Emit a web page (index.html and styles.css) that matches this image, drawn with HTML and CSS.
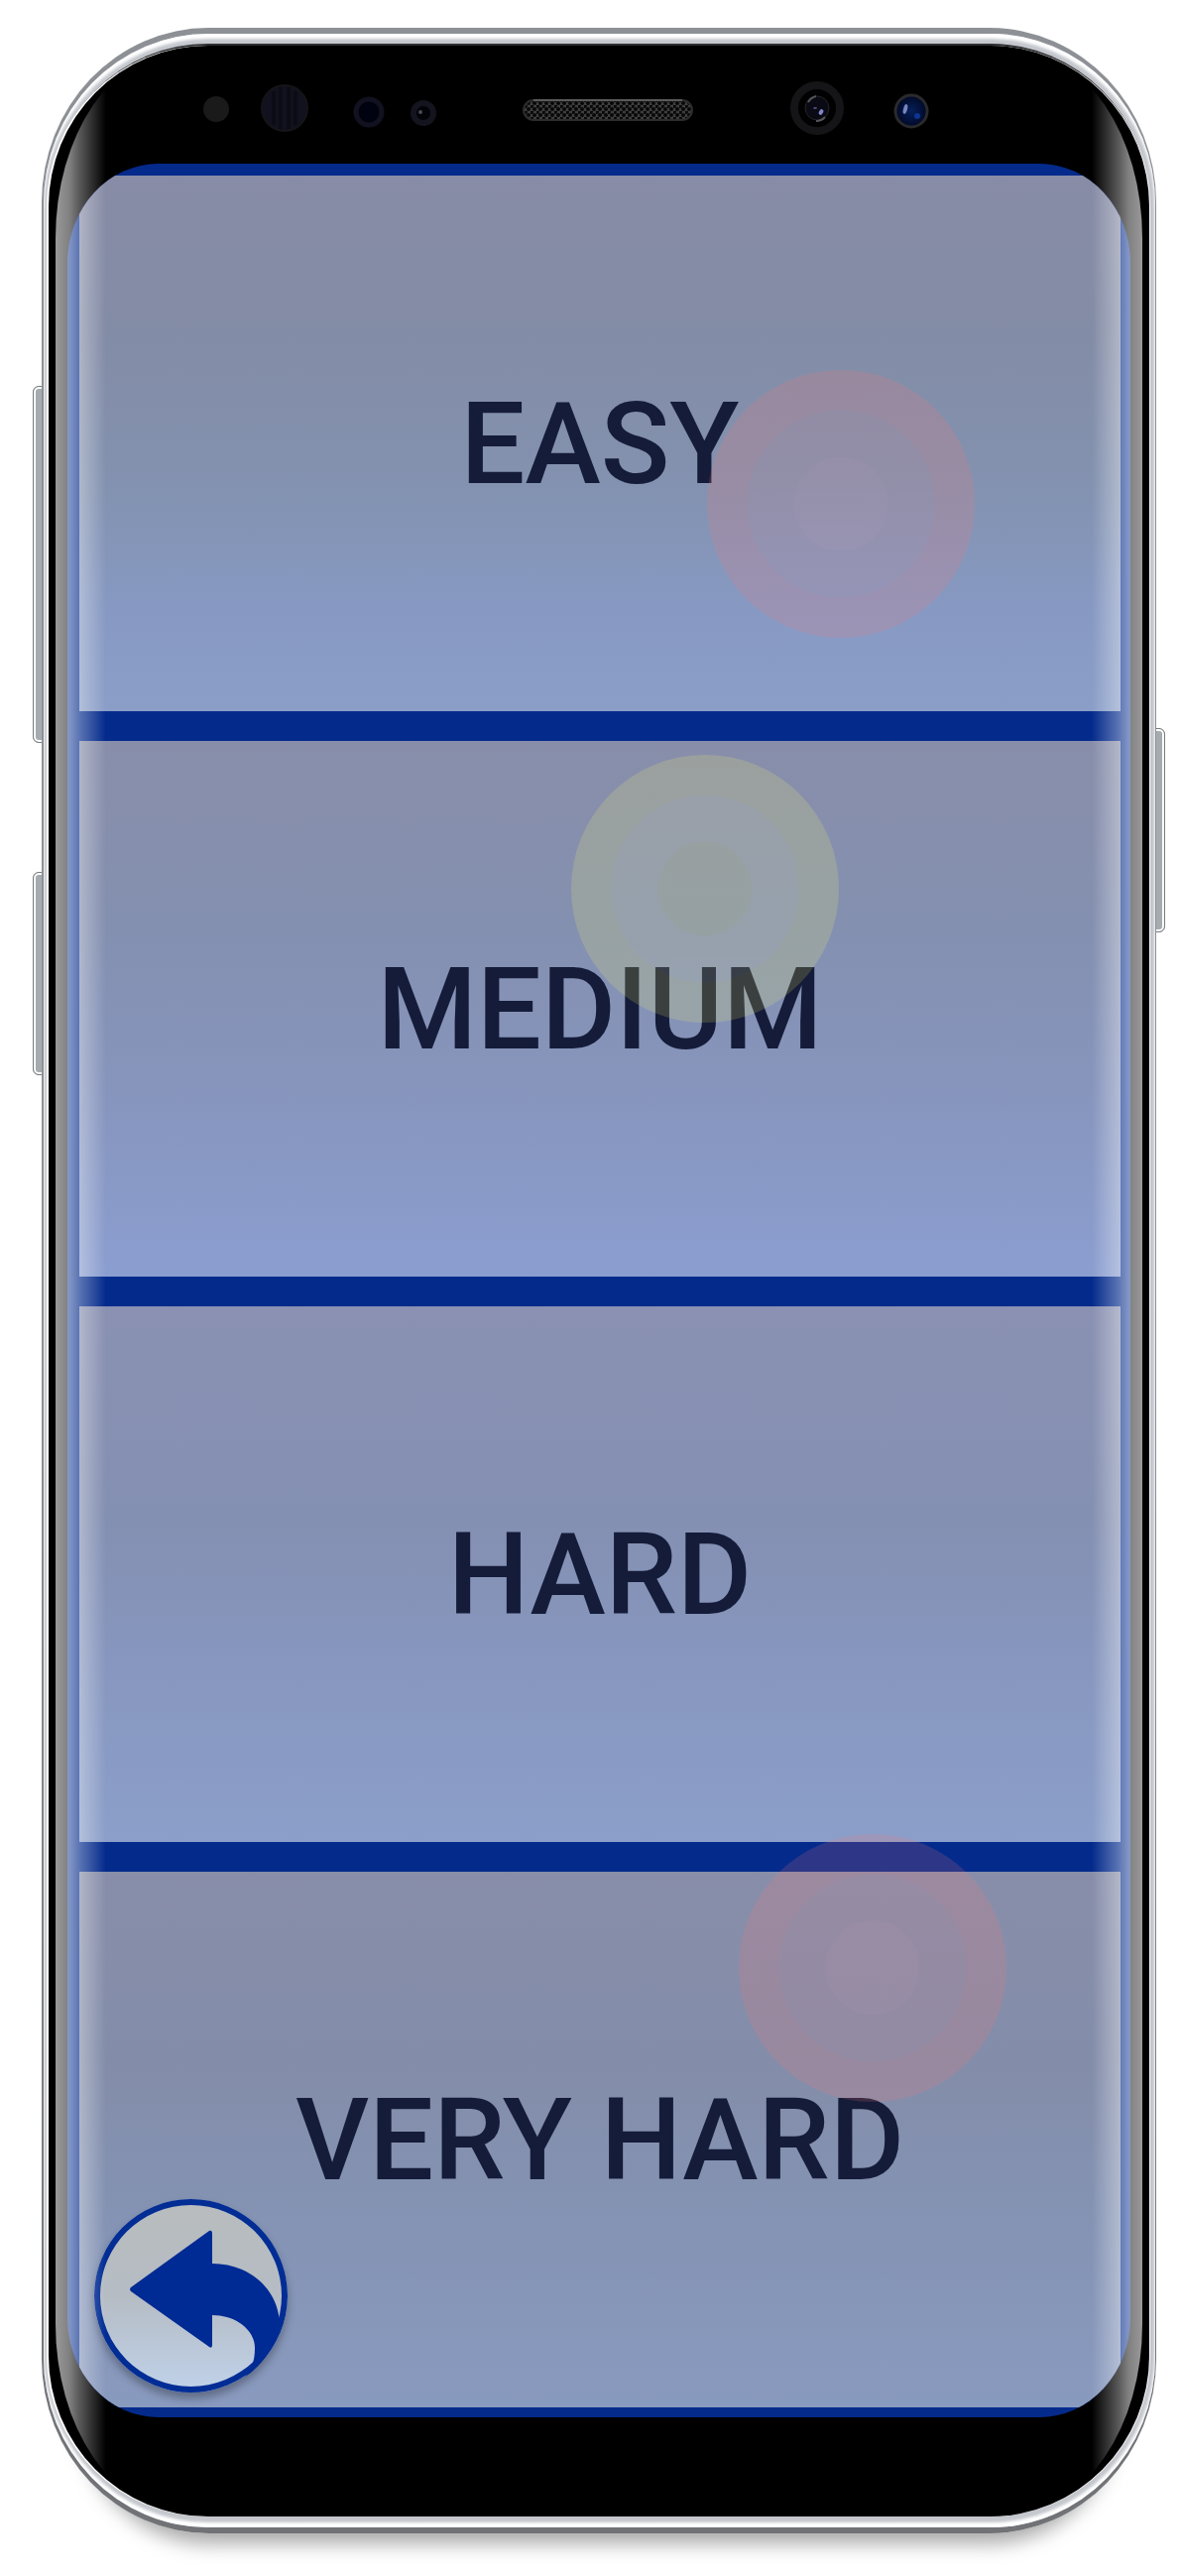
FILE: index.html
```html
<!DOCTYPE html>
<html lang="en">
<head>
<meta charset="utf-8">
<meta name="viewport" content="width=device-width, initial-scale=1">
<title>Select difficulty</title>
<link rel="stylesheet" href="styles.css">
</head>
<body>
<main class="phone">
  <span class="side-key side-key-volume"></span>
  <span class="side-key side-key-assistant"></span>
  <span class="side-key side-key-power"></span>
  <div class="shell">
    <div class="rim">
      <div class="bezel">
        <svg class="sensors" viewBox="0 0 1110 119" aria-hidden="true">
          <defs>
            <pattern id="mesh" width="6" height="6" patternUnits="userSpaceOnUse">
              <rect width="6" height="6" fill="#3d3d3d"/>
              <circle cx="1" cy="1" r="2" fill="#080808"/>
              <circle cx="4" cy="4" r="2" fill="#080808"/>
            </pattern>
            <radialGradient id="lens"><stop offset="0" stop-color="#04205a"/><stop offset="1" stop-color="#020824"/></radialGradient>
          </defs>
          <circle cx="169" cy="64" r="13" fill="#1a1a1b"/>
          <circle cx="238" cy="63" r="23" fill="#11111f" stroke="#151517" stroke-width="2"/>
          <path d="M227 46v34M234 42v42M242 42v42M249 46v34" stroke="#0b0b12" stroke-width="3"/>
          <circle cx="323" cy="67" r="13" fill="#01020f" stroke="#11111f" stroke-width="5"/>
          <circle cx="378" cy="68" r="10" fill="#020208" stroke="#14141f" stroke-width="6"/>
          <circle cx="375" cy="67" r="2" fill="#4a4a5c"/>
          <rect x="479" y="55" width="170" height="20" rx="10" fill="url(#mesh)" stroke="#2c2c2c" stroke-width="2"/>
          <path d="M489 55h150" stroke="#5a5a5a" stroke-width="2"/>
          <circle cx="775" cy="63" r="23" fill="#010101" stroke="#151517" stroke-width="8"/>
          <circle cx="775" cy="63" r="12" fill="#0a0a14" stroke="#242428" stroke-width="1"/>
          <path d="M766 57a12 12 0 0 1 8-6M783 72a12 12 0 0 1-9 4" stroke="#55555c" stroke-width="2" fill="none"/>
          <ellipse cx="779" cy="67" rx="2" ry="3" fill="#7f86c8" transform="rotate(30 779 67)"/>
          <ellipse cx="773" cy="63" rx="2" ry="1" fill="#4a4f86"/>
          <circle cx="870" cy="66" r="16" fill="url(#lens)" stroke="#2a2a2c" stroke-width="3"/>
          <ellipse cx="864" cy="64" rx="2" ry="5" fill="#7585bd" transform="rotate(15 864 64)"/>
          <circle cx="876" cy="71" r="3" fill="#0a3590"/>
        </svg>
        <div class="screen">
          <nav class="levels" aria-label="Difficulty">
            <button class="level level-easy" type="button">EASY</button>
            <button class="level level-medium" type="button">MEDIUM</button>
            <button class="level level-hard" type="button">HARD</button>
            <button class="level level-very-hard" type="button">VERY HARD</button>
          </nav>
          <span class="bubble bubble-red bubble-first"></span>
          <span class="bubble bubble-yellow bubble-second"></span>
          <span class="bubble bubble-red bubble-third"></span>
          <button class="back" type="button" aria-label="Back">
            <svg viewBox="0 0 195 195" aria-hidden="true">
              <path d="M37 89 116 32Q119 31 119 35V65C156 65 185 90 187 124C184 147 170 168 152 179C158 172 162 165 162 150C162 132 143 117 119 117V147Q119 151 116 149L37 93Q35 91 37 89Z" fill="#002a94"/>
            </svg>
          </button>
        </div>
        <div class="glare"></div>
      </div>
    </div>
  </div>
</main>
</body>
</html>
```
FILE: styles.css
```css
* {
  box-sizing: border-box;
}

body {
  margin: 0;
  background: #fff;
  font-family: Roboto, "Liberation Sans", sans-serif;
}

.phone {
  position: relative;
  padding: 28px 26px 43px 42px;
  overflow: hidden;
}

.shell {
  position: relative;
  padding: 6px 1px 6px 2px;
  border-radius: 168px / 176px;
  background: linear-gradient(#8d9095, #8d9298 50%, #707276);
  box-shadow: 0 46px 20px -36px rgba(0, 0, 0, 0.35);
}

.rim {
  padding: 12px 6px 11px 5px;
  border-radius: 166px / 171px;
  background: #c4c7cd;
  box-shadow: inset 0 5px 3px #fff, inset 0 -5px 3px #fff;
}

.bezel {
  position: relative;
  padding-bottom: 100px;
  border-radius: 161px / 162px;
  background: #000;
  box-shadow: 1px 0 0 #fff, -2px 0 0 #fff, 0 -2px 0 #2c2d2f;
}

.sensors {
  display: block;
  width: 100%;
  height: 119px;
}

.screen {
  position: relative;
  margin: 0 19px;
  padding: 12px 10px 10px 12px;
  overflow: hidden;
  border-radius: 92px / 100px;
  background: #042b8c;
}

.levels {
  display: grid;
  gap: 30px;
}

.level {
  min-height: 540px;
  padding: 0;
  border: 0;
  color: #151c39;
  font: 500 115px/1 Roboto, "Liberation Sans", sans-serif;
}

.level-easy {
  background: linear-gradient(#888ca6, #838ca6 30%, #8392b0 58%, #8799c2 80%, #8a9ec8);
}

.level-medium {
  background: linear-gradient(#888eaa, #8490b0 35%, #8795bd 65%, #8b9ed0);
}

.level-hard {
  background: linear-gradient(#8a91b2, #8490b2 40%, #8796be 65%, #8b9fca);
}

.level-very-hard {
  background: linear-gradient(#888eaa, #838da9 35%, #8492b2 60%, #899abf);
}

.bubble {
  position: absolute;
  width: 270px;
  height: 270px;
  border-radius: 50%;
  pointer-events: none;
}

.bubble-red {
  background: radial-gradient(circle, rgba(245, 135, 140, 0.16) 47px, rgba(235, 125, 125, 0.14) 48px 94px, rgba(255, 115, 110, 0.17) 95px);
}

.bubble-yellow {
  background: radial-gradient(circle, rgba(255, 255, 90, 0.15) 47px, rgba(255, 255, 150, 0.15) 48px 94px, rgba(255, 255, 95, 0.16) 95px);
}

.bubble-first {
  top: 208px;
  right: 157px;
}

.bubble-second {
  top: 596px;
  right: 294px;
}

.bubble-third {
  bottom: 318px;
  right: 125px;
}

.back {
  position: absolute;
  left: 27px;
  bottom: 25px;
  width: 195px;
  height: 195px;
  padding: 0;
  border: 0;
  border-radius: 50%;
  background: linear-gradient(#b8bcbd, #b5bcc4 50%, #c0d2ea);
  box-shadow: inset 0 0 0 6px #022d95, 0 6px 8px rgba(0, 0, 0, 0.3);
}

.back svg {
  display: block;
  width: 195px;
  height: 195px;
}

.glare {
  position: absolute;
  inset: 4px 7px;
  border-radius: 130px / 190px;
  background:
    linear-gradient(to right, rgba(255, 255, 255, 0.6), rgba(255, 255, 255, 0.5) 14px, rgba(255, 255, 255, 0.35) 24px, rgba(255, 255, 255, 0) 51px),
    linear-gradient(to left, rgba(255, 255, 255, 0.6), rgba(255, 255, 255, 0.5) 14px, rgba(255, 255, 255, 0.35) 24px, rgba(255, 255, 255, 0) 51px);
  pointer-events: none;
}

.side-key {
  position: absolute;
  width: 12px;
  border: 1px solid #777b7e;
  background: #a5abae;
  box-shadow: inset 0 0 0 2px #fff;
}

.side-key-volume,
.side-key-assistant {
  left: 33px;
  border-radius: 6px 0 0 6px;
}

.side-key-volume {
  top: 389px;
  height: 360px;
}

.side-key-assistant {
  top: 879px;
  height: 205px;
}

.side-key-power {
  top: 734px;
  right: 17px;
  height: 206px;
  border-radius: 0 6px 6px 0;
}
```
